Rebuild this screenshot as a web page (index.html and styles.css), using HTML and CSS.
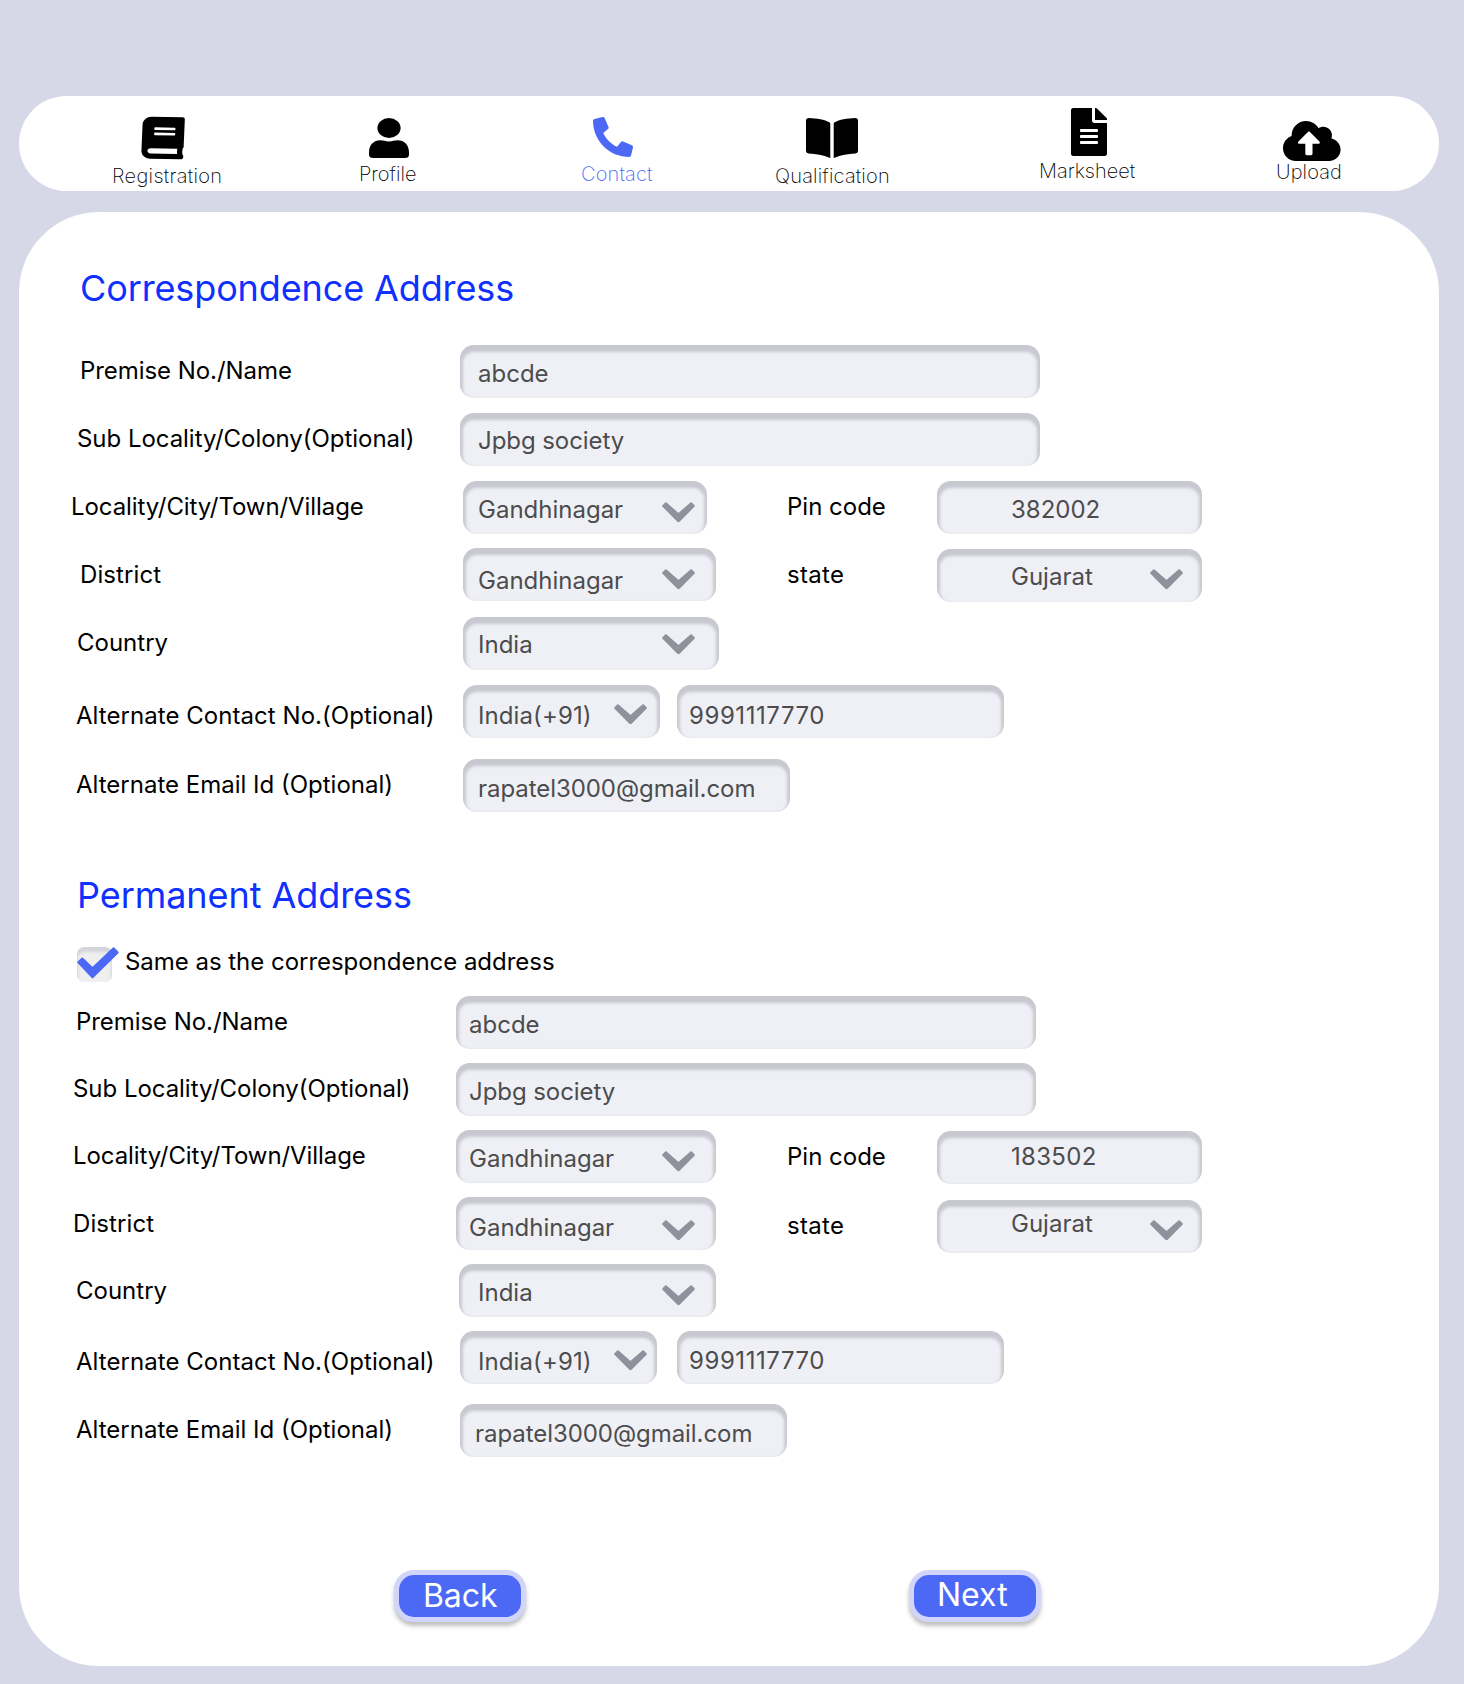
FILE: index.html
```html
<!DOCTYPE html>
<html lang="en">
<head>
<meta charset="utf-8">
<title>Contact details</title>
<link rel="stylesheet" href="styles.css">
</head>
<body>
<svg class="sprite" aria-hidden="true">
  <symbol id="chevron" viewBox="0 0 33 21" preserveAspectRatio="none">
    <path d="M3.900 1.200 16.500 12.600 29.100 1.200 31.800 4.100 17.200 19.300Q16.500 20 15.800 19.300L1.200 4.100Z" fill="currentColor" stroke="currentColor" stroke-width="2" stroke-linejoin="round"/>
  </symbol>
</svg>

<nav class="steps">
  <a class="step step-registration">
    <svg class="icon" viewBox="0 0 448 512" preserveAspectRatio="none"><path d="M448 360V24c0-13.300-10.700-24-24-24H96C43 0 0 43 0 96v320c0 53 43 96 96 96h328c13.300 0 24-10.700 24-24v-16c0-7.500-3.500-14.300-8.900-18.700-4.200-15.400-4.200-59.300 0-74.700 5.400-4.300 8.900-11.100 8.900-18.600zM128 134c0-3.300 2.700-6 6-6h212c3.300 0 6 2.700 6 6v20c0 3.300-2.700 6-6 6H134c-3.300 0-6-2.700-6-6v-20zm0 64c0-3.300 2.700-6 6-6h212c3.300 0 6 2.700 6 6v20c0 3.300-2.700 6-6 6H134c-3.300 0-6-2.700-6-6v-20zm253.400 250H96c-17.700 0-32-14.300-32-32 0-17.600 14.400-32 32-32h285.400c-1.900 17.100-1.900 46.900 0 64z"/></svg>
    <span>Registration</span>
  </a>
  <a class="step step-profile">
    <svg class="icon" viewBox="0 0 40 40"><ellipse cx="20" cy="10" rx="11.600" ry="10"/><path d="M0 34.500C0 27 4.500 22.300 11.500 22.300c3 0 5 1.200 8.500 1.200s5.500-1.200 8.500-1.200C35.500 22.300 40 27 40 34.500V36.500Q40 40 36 40H4Q0 40 0 36.500Z"/></svg>
    <span>Profile</span>
  </a>
  <a class="step step-contact">
    <svg class="icon" viewBox="0 0 512 512"><path transform="matrix(-1 0 0 1 512 0)" d="M493.400 24.600l-104-24c-11.300-2.600-22.900 3.300-27.500 13.900l-48 112c-4.200 9.800-1.400 21.300 6.900 28l60.600 49.600c-36 76.700-98.900 140.500-177.200 177.200l-49.600-60.600c-6.800-8.300-18.200-11.100-28-6.900l-112 48C3.900 366.500-2 378.100.6 389.400l24 104C27.100 504.200 36.700 512 48 512c256.100 0 464-207.500 464-464 0-11.200-7.700-20.900-18.600-23.400z"/></svg>
    <span>Contact</span>
  </a>
  <a class="step step-qualification">
    <svg class="icon" viewBox="0 0 52 40"><path d="M3 0C10.500.3 19 1.700 23.400 4.300Q24.300 4.900 24.300 6V39.400Q24.300 40.200 23.500 39.800C17.500 37 10 35.900 2.600 35.600Q0 35.400 0 33V2.800Q0 0 3 0ZM49 0C41.500.3 33 1.700 28.600 4.300Q27.700 4.900 27.700 6V39.400Q27.700 40.200 28.500 39.800C34.500 37 42 35.900 49.400 35.600Q52 35.400 52 33V2.800Q52 0 49 0Z"/></svg>
    <span>Qualification</span>
  </a>
  <a class="step step-marksheet">
    <svg class="icon" viewBox="0 0 384 512"><path d="M224 136V0H24C10.700 0 0 10.700 0 24v464c0 13.300 10.700 24 24 24h336c13.300 0 24-10.700 24-24V160H248c-13.200 0-24-10.800-24-24zm64 236c0 6.600-5.400 12-12 12H108c-6.600 0-12-5.400-12-12v-8c0-6.600 5.400-12 12-12h168c6.600 0 12 5.400 12 12v8zm0-64c0 6.600-5.400 12-12 12H108c-6.600 0-12-5.400-12-12v-8c0-6.600 5.400-12 12-12h168c6.600 0 12 5.400 12 12v8zm0-72v8c0 6.600-5.400 12-12 12H108c-6.600 0-12-5.400-12-12v-8c0-6.600 5.400-12 12-12h168c6.600 0 12 5.400 12 12zm96-114.100v6.100H256V0h6.100c6.400 0 12.500 2.500 17 7l97.900 98c4.500 4.500 7 10.600 7 16.900z"/></svg>
    <span>Marksheet</span>
  </a>
  <a class="step step-upload">
    <svg class="icon" viewBox="0 32 640 448" preserveAspectRatio="none"><path d="M537.600 226.600c4.100-10.700 6.400-22.400 6.400-34.600 0-53-43-96-96-96-19.700 0-38.100 6-53.300 16.200C367 64.200 315.300 32 256 32c-88.400 0-160 71.600-160 160 0 2.700.1 5.400.2 8.100C40.200 219.800 0 273.200 0 336c0 79.500 64.500 144 144 144h368c70.700 0 128-57.300 128-128 0-61.900-44-113.600-102.400-125.400zM393.400 288H328v112c0 8.800-7.200 16-16 16h-48c-8.800 0-16-7.200-16-16V288h-65.400c-14.300 0-21.400-17.200-11.300-27.400l105.400-105.400c6.200-6.200 16.400-6.200 22.600 0l105.400 105.400c10.100 10.100 2.900 27.400-11.300 27.400z"/></svg>
    <span>Upload</span>
  </a>
</nav>

<main class="card">
  <section class="address correspondence">
    <h2>Correspondence Address</h2>
    <div class="row premise"><span class="label">Premise No./Name</span><div class="field wide"><span>abcde</span></div></div>
    <div class="row colony"><span class="label">Sub Locality/Colony(Optional)</span><div class="field wide"><span>Jpbg society</span></div></div>
    <div class="row city">
      <span class="label">Locality/City/Town/Village</span>
      <div class="field"><span>Gandhinagar</span><svg class="chevron"><use href="#chevron"/></svg></div>
      <span class="side-label">Pin code</span>
      <div class="field side"><span>382002</span></div>
    </div>
    <div class="row district">
      <span class="label">District</span>
      <div class="field"><span>Gandhinagar</span><svg class="chevron"><use href="#chevron"/></svg></div>
      <span class="side-label">state</span>
      <div class="field side"><span>Gujarat</span><svg class="chevron"><use href="#chevron"/></svg></div>
    </div>
    <div class="row country"><span class="label">Country</span><div class="field"><span>India</span><svg class="chevron"><use href="#chevron"/></svg></div></div>
    <div class="row phone">
      <span class="label">Alternate Contact No.(Optional)</span>
      <div class="pair">
        <div class="field"><span>India(+91)</span><svg class="chevron"><use href="#chevron"/></svg></div>
        <div class="field number"><span>9991117770</span></div>
      </div>
    </div>
    <div class="row email"><span class="label">Alternate Email Id (Optional)</span><div class="field"><span>rapatel3000@gmail.com</span></div></div>
  </section>

  <section class="address permanent">
    <h2>Permanent Address</h2>
    <label class="same">
      <span class="checkbox"><svg class="check" viewBox="0 0 42 32"><path d="M1.300 15.300 5.300 11.600 15.500 21.200 36.600 1.300 40.700 5.500 15.500 30.400Z" fill="currentColor" stroke="currentColor" stroke-width="2" stroke-linejoin="round"/></svg></span>
      <span class="same-text">Same as the correspondence address</span>
    </label>
    <div class="row premise"><span class="label">Premise No./Name</span><div class="field wide"><span>abcde</span></div></div>
    <div class="row colony"><span class="label">Sub Locality/Colony(Optional)</span><div class="field wide"><span>Jpbg society</span></div></div>
    <div class="row city">
      <span class="label">Locality/City/Town/Village</span>
      <div class="field"><span>Gandhinagar</span><svg class="chevron"><use href="#chevron"/></svg></div>
      <span class="side-label">Pin code</span>
      <div class="field side"><span>183502</span></div>
    </div>
    <div class="row district">
      <span class="label">District</span>
      <div class="field"><span>Gandhinagar</span><svg class="chevron"><use href="#chevron"/></svg></div>
      <span class="side-label">state</span>
      <div class="field side"><span>Gujarat</span><svg class="chevron"><use href="#chevron"/></svg></div>
    </div>
    <div class="row country"><span class="label">Country</span><div class="field"><span>India</span><svg class="chevron"><use href="#chevron"/></svg></div></div>
    <div class="row phone">
      <span class="label">Alternate Contact No.(Optional)</span>
      <div class="pair">
        <div class="field"><span>India(+91)</span><svg class="chevron"><use href="#chevron"/></svg></div>
        <div class="field number"><span>9991117770</span></div>
      </div>
    </div>
    <div class="row email"><span class="label">Alternate Email Id (Optional)</span><div class="field"><span>rapatel3000@gmail.com</span></div></div>
  </section>

  <div class="actions">
    <button class="btn back">Back</button>
    <button class="btn next">Next</button>
  </div>
</main>
</body>
</html>
```

FILE: styles.css
```css
* { box-sizing: border-box; }

body {
  margin: 0;
  padding: 96px 25px 18px 19px;
  min-height: 1684px;
  background: #d6d8e7;
  font-family: Inter, "Liberation Sans", sans-serif;
  font-size: 24px;
  line-height: 32px;
  color: #000;
  white-space: nowrap;
}

.sprite { display: none; }

/* Step bar */
.steps {
  display: flex;
  align-items: flex-start;
  height: 95px;
  padding-left: 93px;
  margin-bottom: 21px;
  border-radius: 48px;
  background: #fff;
  font-size: 20px;
  font-weight: 200;
  line-height: 24px;
}

.step { display: flex; flex-direction: column; flex: none; }
.step .icon { display: block; fill: currentColor; overflow: visible; }

.step-registration { width: 247px; padding-top: 21px; letter-spacing: .32px; }
.step-registration .icon { width: 42px; height: 42px; margin: 0 0 5px 30px; transform: skew(-2.5deg, 1deg); }

.step-profile { width: 222px; padding-top: 22px; }
.step-profile .icon { width: 40px; height: 40px; margin: 0 0 4px 10px; }

.step-contact { width: 194px; padding-top: 21px; color: #4c69f6; letter-spacing: .15px; }
.step-contact .icon { width: 40px; height: 40px; margin: 0 0 5px 12px; }

.step-qualification { width: 264px; padding-top: 22px; letter-spacing: .17px; }
.step-qualification .icon { width: 52px; height: 40px; margin: 0 0 6px 31px; }

.step-marksheet { width: 237px; padding-top: 12px; }
.step-marksheet .icon { width: 36px; height: 48px; margin: 0 0 3px 32px; }

.step-upload { padding-top: 25px; letter-spacing: .1px; }
.step-upload .icon { width: 57.6px; height: 40px; margin: 0 0 -1px 7px; }

/* Form card */
.card {
  height: 1454px;
  padding-top: 54px;
  border-radius: 80px;
  background: #fff;
}

h2 {
  margin: 0;
  font-size: 36px;
  line-height: 44px;
  font-weight: 400;
  color: #0f30ff;
}

.correspondence h2 { margin: 0 0 35px 61px; letter-spacing: -.12px; }
.permanent h2 { margin: 0 0 30px 58px; letter-spacing: -.06px; }
.permanent { margin-top: 61px; }

.row {
  display: grid;
  grid-template-columns: var(--start) calc(767px - var(--start)) 151px 265px;
  align-items: start;
  height: 53px;
  margin-bottom: 15px;
}

.label { padding: var(--label-y, 10px) 0 0 var(--label-x); letter-spacing: var(--label-spacing, 0); }
.side-label { padding: var(--side-label-y, 10px) 0 0 1px; }
.district .side-label { letter-spacing: .3px; }

.premise { --label-spacing: -.06px; }
.colony { --label-spacing: -.04px; }
.city { --label-spacing: -.08px; }
.district { --label-spacing: .1px; }
.phone { --label-spacing: .05px; }

.field {
  display: flex;
  align-items: flex-start;
  width: var(--width);
  height: 53px;
  border-radius: 14px;
  background: #eff0f5;
  box-shadow: inset 0 4px 3px 3px #c8c8d1;
  color: #4c4c4e;
}

.field span { margin: var(--value-y, 13px) 0 0 var(--value-x); }

.field.wide { grid-column: 2 / -1; width: 580px; }

.field.side {
  --value-x: 74px;
  width: 265px;
  margin-top: var(--side-y, 0);
}
.field.side span { margin-top: var(--side-value-y, 13px); }
.field.side .chevron { margin: 20px 19px 0 auto; }

.chevron {
  width: 33px;
  height: 20.500px;
  margin: var(--chevron-y) var(--chevron-right) 0 auto;
  color: #8f919c;
}

.pair { display: flex; grid-column: 2 / -1; gap: var(--gap); }
.pair .field { letter-spacing: .1px; }
.pair .number { --value-x: 12px; width: 327px; letter-spacing: .57px; }
.field.number span { margin-top: var(--number-y); }

.email .field { width: 327px; letter-spacing: -.06px; }
.colony .field { letter-spacing: -.06px; }

.correspondence .row { --start: 444px; --value-x: 15px; }
.correspondence .premise { --start: 441px; --label-x: 61px; --value-x: 18px; }
.correspondence .colony { --start: 441px; --label-x: 58px; --value-x: 18px; --value-y: 12px; }
.correspondence .city { --label-x: 52px; --width: 244px; --chevron-y: 21px; --chevron-right: 12px; margin-bottom: 14px; }
.correspondence .district { --label-x: 61px; --label-y: 11px; --side-label-y: 11px; --width: 253px; --value-y: 17px; --chevron-y: 21px; --chevron-right: 21px; --side-y: 1px; --side-value-y: 12px; margin-bottom: 16px; }
.correspondence .country { --label-x: 58px; --width: 256px; --value-y: 12px; --chevron-y: 17px; --chevron-right: 24px; }
.correspondence .phone { --label-x: 57px; --label-y: 15px; --width: 197px; --value-y: 15px; --number-y: 15px; --chevron-y: 19px; --chevron-right: 13px; --gap: 17px; margin-bottom: 21px; }
.correspondence .email { --label-x: 57px; --value-y: 14px; margin-bottom: 0; }

.permanent .row { --start: 437px; --value-x: 13px; margin-bottom: 14px; }
.permanent .premise { --label-x: 57px; }
.permanent .colony { --label-x: 54px; }
.permanent .city { --label-x: 54px; --side-label-y: 11px; --width: 260px; --chevron-y: 21px; --chevron-right: 21px; --side-y: 1px; --side-value-y: 10px; }
.permanent .city .side { letter-spacing: .3px; }
.permanent .district { --label-x: 54px; --label-y: 11px; --side-label-y: 13px; --width: 260px; --value-y: 15px; --chevron-y: 23px; --chevron-right: 21px; --side-y: 3px; --side-value-y: 8px; }
.permanent .country { --start: 440px; --label-x: 57px; --label-y: 11px; --width: 257px; --value-x: 19px; --chevron-y: 21px; --chevron-right: 21px; }
.permanent .phone { --start: 441px; --label-x: 57px; --label-y: 15px; --width: 197px; --value-x: 18px; --value-y: 15px; --number-y: 14px; --chevron-y: 19px; --chevron-right: 10px; --gap: 20px; margin-bottom: 20px; }
.permanent .email { --start: 441px; --label-x: 57px; --value-x: 15px; --value-y: 14px; margin-bottom: 0; }

/* Same-address toggle */
.same {
  display: flex;
  align-items: flex-start;
  height: 35px;
  margin: 0 0 14px 58px;
}

.checkbox {
  flex: none;
  width: 35px;
  height: 35px;
  border-radius: 7px;
  background: #efefef;
  box-shadow: inset 0 4px 3px 1px #d4d4dc;
  color: #4c69f6;
}

.check { display: block; width: 42px; height: 32px; overflow: visible; }
.same-text { margin: -1px 0 0 13px; letter-spacing: -.03px; }

/* Footer buttons */
.actions {
  display: flex;
  gap: 383px;
  padding: 113px 0 0 375px;
}

.btn {
  width: 132px;
  height: 52px;
  padding: 0 0 0 24px;
  border: 5px solid #d1d5f9;
  border-radius: 20px;
  background: #4c69f6;
  box-shadow: 0 4px 4px rgba(0, 0, 0, .25);
  color: #fff;
  font: 400 32px/38px Inter, "Liberation Sans", sans-serif;
  letter-spacing: -.1px;
  text-align: left;
}

.btn.next { padding: 0 0 2px 23px; letter-spacing: 0; }
```
